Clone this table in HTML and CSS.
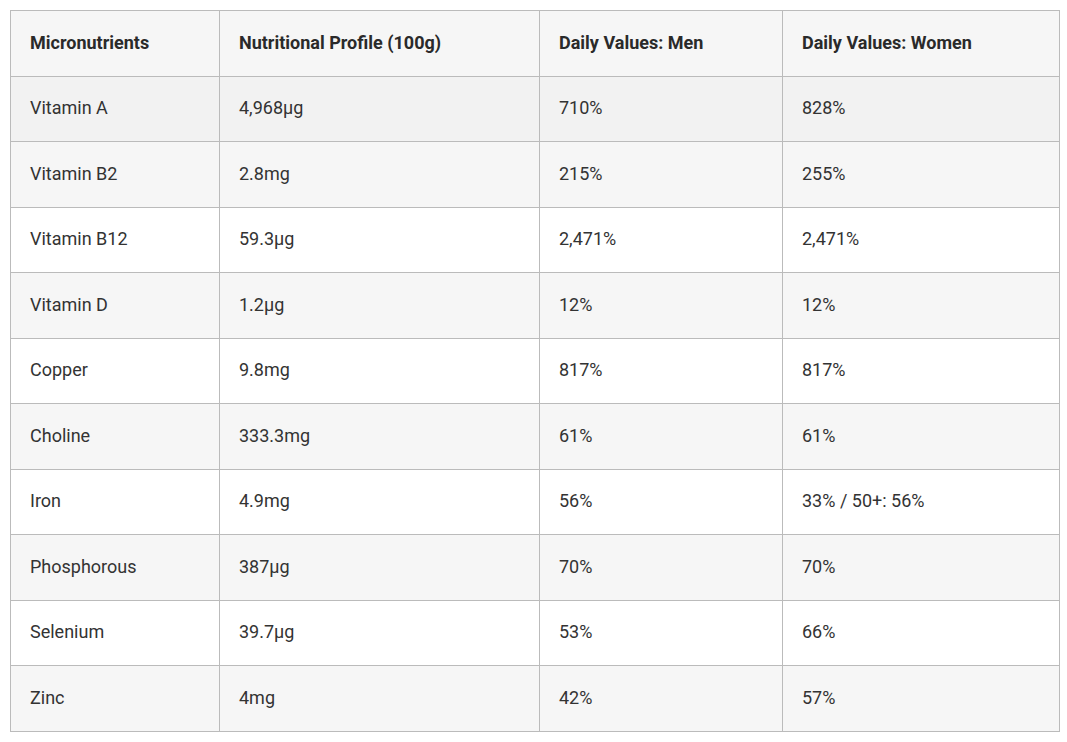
FILE: index.html
```html
<!DOCTYPE html>
<html lang="en">
<head>
<meta charset="utf-8">
<title>Micronutrients</title>
<link rel="stylesheet" href="styles.css">
</head>
<body>
<table class="nutri">
  <colgroup>
    <col class="c1"><col class="c2"><col class="c3"><col class="c4">
  </colgroup>
  <thead>
    <tr><th>Micronutrients</th><th>Nutritional Profile (100g)</th><th>Daily Values: Men</th><th>Daily Values: Women</th></tr>
  </thead>
  <tbody>
    <tr class="hover"><td>Vitamin A</td><td>4,968µg</td><td>710%</td><td>828%</td></tr>
    <tr><td>Vitamin B2</td><td>2.8mg</td><td>215%</td><td>255%</td></tr>
    <tr><td>Vitamin B12</td><td>59.3µg</td><td>2,471%</td><td>2,471%</td></tr>
    <tr><td>Vitamin D</td><td>1.2µg</td><td>12%</td><td>12%</td></tr>
    <tr><td>Copper</td><td>9.8mg</td><td>817%</td><td>817%</td></tr>
    <tr><td>Choline</td><td>333.3mg</td><td>61%</td><td>61%</td></tr>
    <tr><td>Iron</td><td>4.9mg</td><td>56%</td><td>33% / 50+: 56%</td></tr>
    <tr><td>Phosphorous</td><td>387µg</td><td>70%</td><td>70%</td></tr>
    <tr><td>Selenium</td><td>39.7µg</td><td>53%</td><td>66%</td></tr>
    <tr><td>Zinc</td><td>4mg</td><td>42%</td><td>57%</td></tr>
  </tbody>
</table>
</body>
</html>
```
FILE: styles.css
```css
html, body {
  background: #ffffff;
}
body {
  margin: 10px 0 0 10px;
  font-family: Roboto, "Liberation Sans", Arial, sans-serif;
  font-size: 18px;
  color: #333333;
}
.nutri {
  border-collapse: collapse;
  table-layout: fixed;
  width: 1049px;
}
.c1 { width: 209px; }
.c2 { width: 320px; }
.c3 { width: 243px; }
.c4 { width: 277px; }
.nutri th,
.nutri td {
  border: 1px solid #bbbbbb;
  padding: 19.5px 19px 20.5px;
  line-height: 24.5px;
  text-align: left;
  vertical-align: middle;
}
.nutri th {
  font-weight: 700;
  color: #2a2a2a;
  background: #f6f6f6;
}
.nutri tbody tr {
  background: #ffffff;
}
.nutri tbody tr:nth-child(even) {
  background: #f6f6f6;
}
.nutri tbody tr.hover {
  background: #f2f2f2;
}
```
